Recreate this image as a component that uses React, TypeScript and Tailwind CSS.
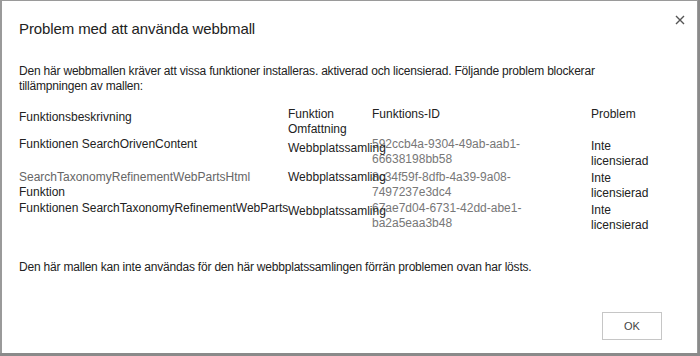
const rows = [
  {
    name: "Funktionen SearchOrivenContent",
    nameGray: false,
    extra: "",
    scope: "Webbplatssamling",
    id: ["592ccb4a-9304-49ab-aab1-", "66638198bb58"],
    pads: ["pt-0", "pt-[4px]", "pt-0", "pt-[2px]"],
  },
  {
    name: "SearchTaxonomyRefinementWebPartsHtml",
    nameGray: true,
    extra: "Funktion",
    scope: "Webbplatssamling",
    id: ["8c34f59f-8dfb-4a39-9a08-", "7497237e3dc4"],
    pads: ["pt-[1px]", "pt-[1px]", "pt-[1px]", "pt-[2px]"],
  },
  {
    name: "Funktionen SearchTaxonomyRefinementWebParts",
    nameGray: false,
    extra: "",
    scope: "Webbplatssamling",
    id: ["67ae7d04-6731-42dd-abe1-", "ba2a5eaa3b48"],
    pads: ["pt-0", "pt-[3px]", "pt-0", "pt-[2px]"],
  },
];

const App = () => {
  return (
    <div
      className="h-[356px] w-[700px] bg-[#8a8a8a]"
      style={{ fontFamily: '"Liberation Sans", Arial, sans-serif' }}
    >
      <div className="relative h-[353px] w-[698px] border-l-2 border-t border-r border-[#9a9a9a] bg-white text-[12px] text-[#222]">
        {/* Close button */}
        <button
          type="button"
          aria-label="Stäng"
          className="absolute right-[9px] top-[11px] flex h-[16px] w-[16px] items-center justify-center"
        >
          <svg width="10" height="10" viewBox="0 0 10 10">
            <path d="M1 1 L9 9 M9 1 L1 9" stroke="#555" strokeWidth="1.4" />
          </svg>
        </button>

        <div className="pl-[17px] pr-4">
          <h1 className="pt-[18px] text-[15px] leading-[20px] tracking-[-0.1px] text-[#222]">
            Problem med att använda webbmall
          </h1>

          <p className="mt-[25px] w-[600px] leading-[15px] tracking-[-0.2px]">
            Den här webbmallen kräver att vissa funktioner installeras. aktiverad och licensierad. Följande problem blockerar
            tillämpningen av mallen:
          </p>

          <div className="mt-[13px] grid grid-cols-[269px_84px_219px_1fr] leading-[15px]">
            {/* header */}
            <div className="pt-[3px]">Funktionsbeskrivning</div>
            <div>
              <div>Funktion</div>
              <div>Omfattning</div>
            </div>
            <div>Funktions-ID</div>
            <div>Problem</div>

            {rows.map((r) => (
              <div key={r.id[0]} className="contents">
                <div className={r.pads[0]}>
                  <div className={r.nameGray ? "whitespace-nowrap text-[#666]" : "whitespace-nowrap"}>{r.name}</div>
                  {r.extra ? <div>{r.extra}</div> : null}
                </div>
                <div className={r.pads[1]}>
                  <div className="relative z-10 whitespace-nowrap">{r.scope}</div>
                </div>
                <div className={r.pads[2]}>
                  <div className="whitespace-nowrap text-[#777]">{r.id[0]}</div>
                  <div className="whitespace-nowrap text-[#777]">{r.id[1]}</div>
                </div>
                <div className={r.pads[3]}>
                  <div>Inte</div>
                  <div>licensierad</div>
                </div>
              </div>
            ))}
          </div>

          <p className="mt-[27px] leading-[15px] tracking-[-0.2px]">
            Den här mallen kan inte användas för den här webbplatssamlingen förrän problemen ovan har lösts.
          </p>

          <div className="mt-[37px] flex justify-end pr-[19px]">
            <button
              type="button"
              className="h-[28px] w-[60px] border border-[#c6c6c6] bg-white text-[11px] text-[#444]"
            >
              OK
            </button>
          </div>
        </div>
      </div>
    </div>
  );
};

export default App;
